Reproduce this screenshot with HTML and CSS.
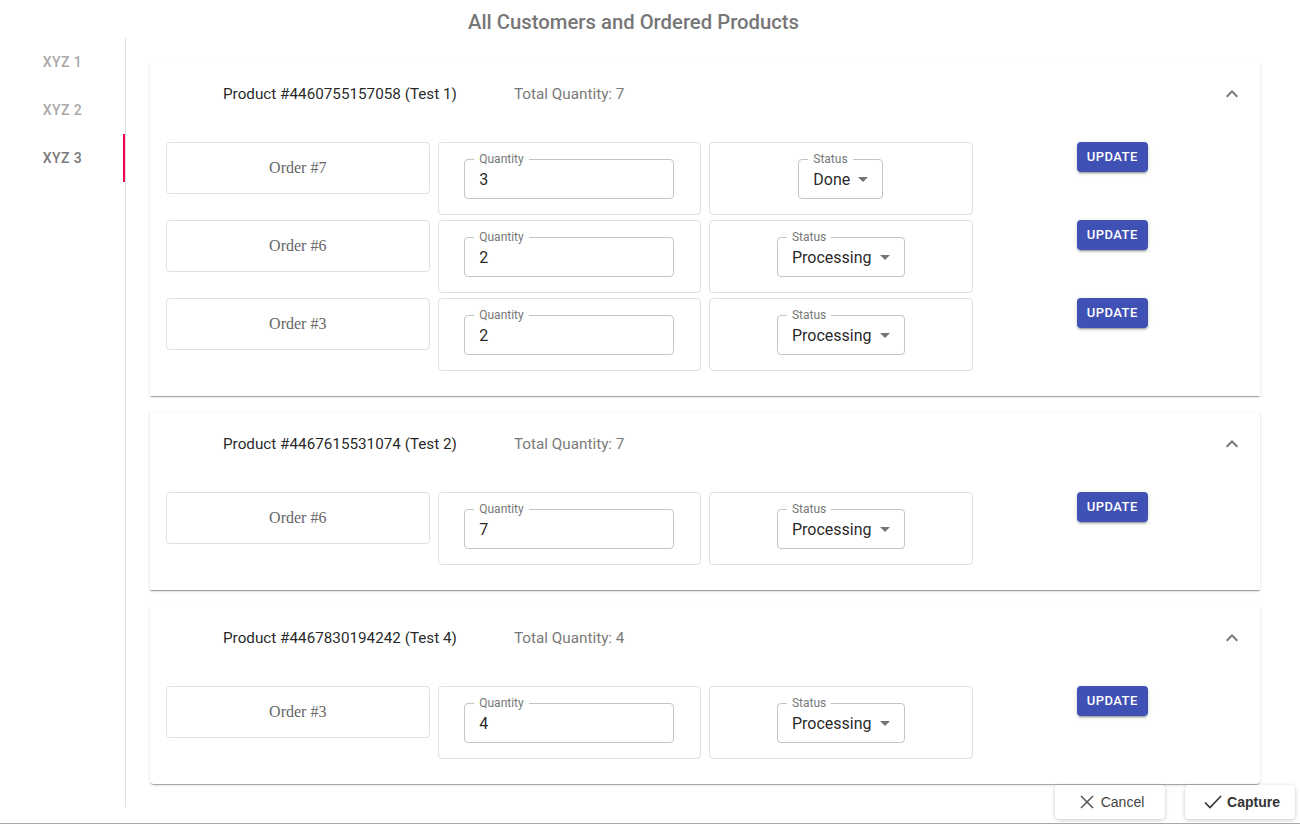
FILE: index.html
```html
<!DOCTYPE html>
<html>
<head>
<meta charset="utf-8">
<link rel="stylesheet" href="styles.css">
</head>
<body>
<div class="page">
  <h1 class="title">All Customers and Ordered Products</h1>
  <div class="main">
    <nav class="tabs">
      <div class="tab">XYZ 1</div>
      <div class="tab">XYZ 2</div>
      <div class="tab active">XYZ 3</div>
    </nav>
    <div class="content">
      <section class="card first">
        <div class="summary">
          <span class="product">Product #4460755157058 (Test 1)</span>
          <span class="total">Total Quantity: 7</span>
          <svg class="chev" viewBox="0 0 24 24" width="24" height="24"><path d="M12 8l-6 6 1.41 1.41L12 10.83l4.59 4.58L18 14z"/></svg>
        </div>
        <div class="details">
          <div class="order">Order #7</div>
          <div class="box"><div class="field qty"><span class="lbl">Quantity</span><span class="val">3</span></div></div>
          <div class="box"><div class="field sel"><span class="lbl">Status</span><span class="val">Done</span><svg class="arrow" viewBox="0 0 24 24" width="24" height="24"><path d="M7 10l5 5 5-5z"/></svg></div></div>
          <button class="update">UPDATE</button>

          <div class="order">Order #6</div>
          <div class="box"><div class="field qty"><span class="lbl">Quantity</span><span class="val">2</span></div></div>
          <div class="box"><div class="field sel"><span class="lbl">Status</span><span class="val">Processing</span><svg class="arrow" viewBox="0 0 24 24" width="24" height="24"><path d="M7 10l5 5 5-5z"/></svg></div></div>
          <button class="update">UPDATE</button>

          <div class="order">Order #3</div>
          <div class="box"><div class="field qty"><span class="lbl">Quantity</span><span class="val">2</span></div></div>
          <div class="box"><div class="field sel"><span class="lbl">Status</span><span class="val">Processing</span><svg class="arrow" viewBox="0 0 24 24" width="24" height="24"><path d="M7 10l5 5 5-5z"/></svg></div></div>
          <button class="update">UPDATE</button>
        </div>
      </section>

      <section class="card">
        <div class="summary">
          <span class="product">Product #4467615531074 (Test 2)</span>
          <span class="total">Total Quantity: 7</span>
          <svg class="chev" viewBox="0 0 24 24" width="24" height="24"><path d="M12 8l-6 6 1.41 1.41L12 10.83l4.59 4.58L18 14z"/></svg>
        </div>
        <div class="details">
          <div class="order">Order #6</div>
          <div class="box"><div class="field qty"><span class="lbl">Quantity</span><span class="val">7</span></div></div>
          <div class="box"><div class="field sel"><span class="lbl">Status</span><span class="val">Processing</span><svg class="arrow" viewBox="0 0 24 24" width="24" height="24"><path d="M7 10l5 5 5-5z"/></svg></div></div>
          <button class="update">UPDATE</button>
        </div>
      </section>

      <section class="card last">
        <div class="summary">
          <span class="product">Product #4467830194242 (Test 4)</span>
          <span class="total">Total Quantity: 4</span>
          <svg class="chev" viewBox="0 0 24 24" width="24" height="24"><path d="M12 8l-6 6 1.41 1.41L12 10.83l4.59 4.58L18 14z"/></svg>
        </div>
        <div class="details">
          <div class="order">Order #3</div>
          <div class="box"><div class="field qty"><span class="lbl">Quantity</span><span class="val">4</span></div></div>
          <div class="box"><div class="field sel"><span class="lbl">Status</span><span class="val">Processing</span><svg class="arrow" viewBox="0 0 24 24" width="24" height="24"><path d="M7 10l5 5 5-5z"/></svg></div></div>
          <button class="update">UPDATE</button>
        </div>
      </section>
    </div>
  </div>
  <div class="actions">
    <button class="act">
      <svg viewBox="0 0 14 14" width="14" height="14"><path d="M1 1L13 13M13 1L1 13" stroke="#555" stroke-width="1.5" fill="none"/></svg>
      <span>Cancel</span>
    </button>
    <button class="act primary">
      <svg viewBox="0 0 18 14" width="18" height="14"><path d="M1 7.5L6 12.5L17 1" stroke="#333" stroke-width="1.6" fill="none"/></svg>
      <span>Capture</span>
    </button>
  </div>
</div>
</body>
</html>
```

FILE: styles.css
```css
* { box-sizing: border-box; }
html, body { margin: 0; padding: 0; background: #fff; }
body { font-family: Roboto, "Liberation Sans", Arial, sans-serif; color: rgba(0,0,0,0.87); }

.page {
  position: relative;
  height: 824px;
  border-bottom: 1px solid #a8a8a8;
  overflow: hidden;
}

.title {
  margin: 0;
  padding: 8px 33px 2px 0;
  line-height: 28px;
  font-size: 20.3px;
  font-weight: 500;
  text-align: center;
  color: #777;
}

.main {
  display: flex;
  height: 769px;
}

.tabs {
  width: 126px;
  flex: none;
  border-right: 1px solid #e0e0e0;
  display: flex;
  flex-direction: column;
}
.tab {
  height: 48px;
  line-height: 48px;
  text-align: center;
  font-size: 14px;
  font-weight: 500;
  letter-spacing: 0.4px;
  color: #aaa;
}
.tab.active {
  color: #7a7a7a;
  box-shadow: inset -2px 0 0 #f50057;
}

.content {
  flex: 1;
  padding: 24px 40px 0 24px;
  display: flex;
  flex-direction: column;
  gap: 16px;
}

.card {
  background: #fff;
  box-shadow: 0 2px 1px -1px rgba(0,0,0,0.2), 0 1px 1px 0 rgba(0,0,0,0.14), 0 1px 3px 0 rgba(0,0,0,0.12);
}
.card.first { border-radius: 4px 4px 0 0; }
.card.last { border-radius: 0 0 4px 4px; }

.summary {
  height: 64px;
  display: flex;
  align-items: center;
  padding: 0 16px 0 73px;
}
.product {
  width: 291px;
  font-size: 15.25px;
  color: rgba(0,0,0,0.87);
}
.total {
  flex: 1;
  font-size: 15.25px;
  color: #7a7a7a;
}
.chev {
  fill: #757575;
}

.details {
  display: grid;
  grid-template-columns: repeat(4, 1fr);
  column-gap: 8px;
  row-gap: 5px;
  align-items: start;
  padding: 16px 16px 25px;
}

.order {
  height: 52px;
  border: 1px solid #e0e0e0;
  border-radius: 4px;
  display: flex;
  align-items: center;
  justify-content: center;
  font-family: "Liberation Serif", "Times New Roman", serif;
  font-size: 16px;
  color: #666;
}

.box {
  height: 73px;
  border: 1px solid #e0e0e0;
  border-radius: 4px;
  display: flex;
  align-items: center;
  justify-content: center;
}

.field {
  position: relative;
  height: 40px;
  border: 1px solid #c4c4c4;
  border-radius: 4px;
  display: flex;
  align-items: center;
  padding-left: 14px;
  font-size: 16px;
  color: rgba(0,0,0,0.87);
}
.field.qty { width: 210px; }
.field.sel { padding-right: 32px; }
.lbl {
  position: absolute;
  left: 9px;
  top: -8px;
  padding: 0 5px;
  background: #fff;
  font-size: 12px;
  line-height: 14px;
  color: #777;
}
.val { line-height: 19px; padding-top: 2px; }
.arrow {
  position: absolute;
  right: 7px;
  top: 7px;
  fill: #757575;
}

.update {
  justify-self: center;
  height: 30px;
  padding: 4px 10px;
  border: none;
  border-radius: 4px;
  background: #3f51b5;
  color: #fff;
  font-family: Roboto, sans-serif;
  font-size: 13px;
  font-weight: 500;
  letter-spacing: 0.46px;
  line-height: 22px;
  box-shadow: 0 3px 1px -2px rgba(0,0,0,0.2), 0 2px 2px 0 rgba(0,0,0,0.14), 0 1px 5px 0 rgba(0,0,0,0.12);
}

.actions {
  position: absolute;
  right: 5px;
  bottom: 4px;
  display: flex;
  gap: 20px;
}
.act {
  width: 110px;
  height: 34px;
  border: none;
  border-radius: 4px;
  background: #fff;
  display: flex;
  align-items: center;
  justify-content: center;
  gap: 7px;
  padding: 0 0 0 4px;
  font-family: "Liberation Sans", Arial, sans-serif;
  font-size: 14px;
  color: #444;
  box-shadow: 0 1px 4px rgba(0,0,0,0.22);
}
.act.primary { font-weight: 700; color: #333; gap: 5px; }
```
